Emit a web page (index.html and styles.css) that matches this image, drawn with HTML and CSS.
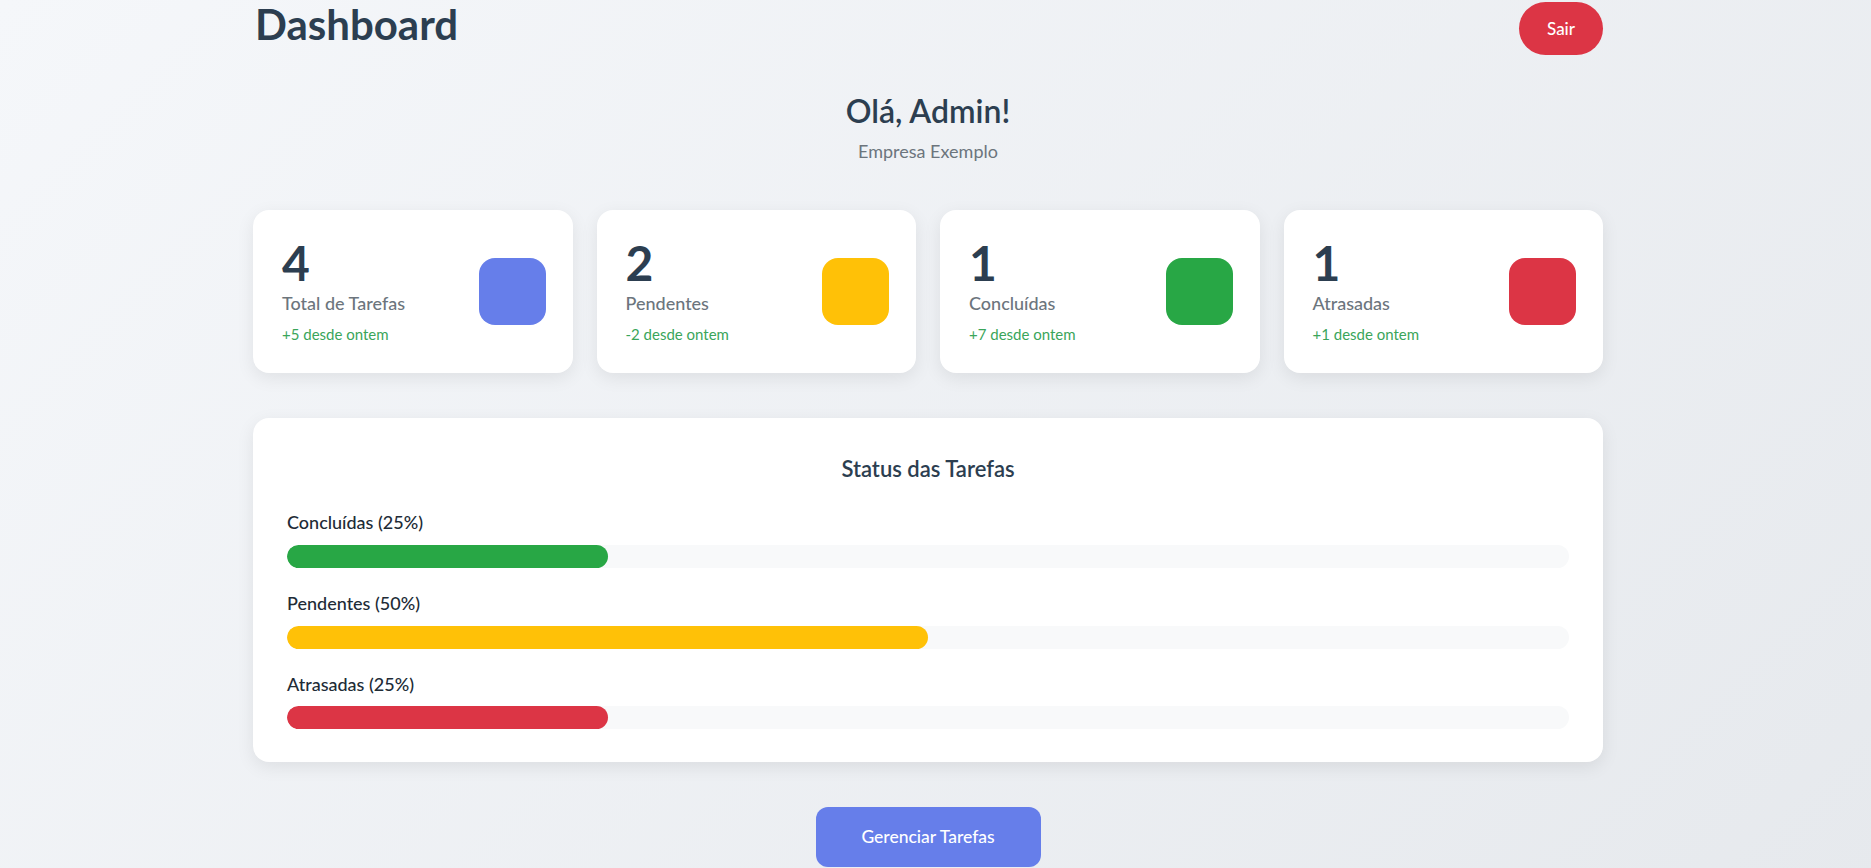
FILE: index.html
```html
<!DOCTYPE html>
<html lang="pt-BR">
<head>
<meta charset="utf-8">
<title>Dashboard</title>
<link rel="stylesheet" href="styles.css">
</head>
<body>
<div class="container">
  <header class="header">
    <h1 class="title">Dashboard</h1>
    <button class="btn-logout">Sair</button>
  </header>

  <section class="welcome">
    <h2 class="welcome-title">Olá, Admin!</h2>
    <p class="welcome-company">Empresa Exemplo</p>
  </section>

  <section class="stats">
    <div class="stat-card">
      <div class="stat-info">
        <div class="stat-number">4</div>
        <div class="stat-label">Total de Tarefas</div>
        <div class="stat-change">+5 desde ontem</div>
      </div>
      <div class="stat-icon icon-total"></div>
    </div>
    <div class="stat-card">
      <div class="stat-info">
        <div class="stat-number">2</div>
        <div class="stat-label">Pendentes</div>
        <div class="stat-change">-2 desde ontem</div>
      </div>
      <div class="stat-icon icon-pending"></div>
    </div>
    <div class="stat-card">
      <div class="stat-info">
        <div class="stat-number">1</div>
        <div class="stat-label">Concluídas</div>
        <div class="stat-change">+7 desde ontem</div>
      </div>
      <div class="stat-icon icon-done"></div>
    </div>
    <div class="stat-card">
      <div class="stat-info">
        <div class="stat-number">1</div>
        <div class="stat-label">Atrasadas</div>
        <div class="stat-change">+1 desde ontem</div>
      </div>
      <div class="stat-icon icon-late"></div>
    </div>
  </section>

  <section class="status-panel">
    <h3 class="status-title">Status das Tarefas</h3>
    <div class="status-list">
      <div class="status-row">
        <div class="status-label">Concluídas (25%)</div>
        <div class="track"><div class="fill fill-done" style="width: 25%"></div></div>
      </div>
      <div class="status-row">
        <div class="status-label">Pendentes (50%)</div>
        <div class="track"><div class="fill fill-pending" style="width: 50%"></div></div>
      </div>
      <div class="status-row">
        <div class="status-label">Atrasadas (25%)</div>
        <div class="track"><div class="fill fill-late" style="width: 25%"></div></div>
      </div>
    </div>
  </section>

  <div class="actions">
    <button class="btn-manage">Gerenciar Tarefas</button>
  </div>
</div>
</body>
</html>
```

FILE: styles.css
```css
* {
  box-sizing: border-box;
}

html, body {
  margin: 0;
  padding: 0;
}

body {
  font-family: "Lato", "Liberation Sans", sans-serif;
  background: linear-gradient(135deg, #f5f7fa 0%, #e6e9ed 100%);
  min-height: 100vh;
  color: #2c3e50;
  padding-right: 15px;
}

.container {
  width: 1350px;
  margin: 0 auto;
  padding-top: 2px;
}

.header {
  display: flex;
  justify-content: space-between;
  align-items: flex-start;
  height: 53px;
}

.title {
  margin: -3px 0 0 2px;
  font-size: 42px;
  line-height: 1.2;
  font-weight: 700;
  color: #2c3e50;
}

.btn-logout {
  font-family: inherit;
  background: #dc3545;
  color: #fff;
  border: none;
  border-radius: 30px;
  font-size: 17px;
  font-weight: 500;
  line-height: 21px;
  padding: 16px 28px;
  width: 84px;
  height: 53px;
}

.welcome {
  text-align: center;
  margin-top: 37px;
}

.welcome-title {
  margin: 0;
  font-size: 32px;
  line-height: 1.2;
  font-weight: 600;
  color: #2c3e50;
}

.welcome-company {
  margin: 8px 0 0;
  font-size: 18px;
  line-height: 27px;
  color: #6c757d;
}

.stats {
  display: grid;
  grid-template-columns: repeat(4, 1fr);
  gap: 24px;
  margin-top: 45px;
}

.stat-card {
  background: #fff;
  border-radius: 16px;
  padding: 29px 27px 30px 29px;
  display: flex;
  justify-content: space-between;
  align-items: center;
  box-shadow: 0 5px 18px rgba(0, 0, 0, 0.08);
}

.stat-number {
  font-size: 48px;
  line-height: 48px;
  font-weight: 700;
  color: #2c3e50;
}

.stat-label {
  margin-top: 6px;
  font-size: 18px;
  line-height: 21.6px;
  font-weight: 500;
  color: #6c757d;
}

.stat-change {
  margin-top: 10px;
  font-size: 15px;
  line-height: 18px;
  font-weight: 400;
  color: #3aa55a;
}

.stat-icon {
  width: 67px;
  height: 67px;
  border-radius: 16px;
}

.icon-total { background: #667eea; }
.icon-pending { background: #ffc107; }
.icon-done { background: #28a745; }
.icon-late { background: #dc3545; }

.status-panel {
  margin-top: 45px;
  background: #fff;
  border-radius: 16px;
  padding: 38px 34px 33px;
  box-shadow: 0 5px 18px rgba(0, 0, 0, 0.08);
}

.status-title {
  margin: 0;
  text-align: center;
  font-size: 22px;
  line-height: 26.4px;
  font-weight: 600;
  color: #2c3e50;
}

.status-list {
  display: flex;
  flex-direction: column;
  gap: 25px;
  margin-top: 30px;
}

.status-label {
  font-size: 18px;
  line-height: 21.6px;
  font-weight: 500;
  color: #212b36;
}

.track {
  margin-top: 11px;
  height: 23px;
  background: #f8f9fa;
  border-radius: 12px;
  overflow: hidden;
}

.fill {
  height: 100%;
  border-radius: 12px;
}

.fill-done { background: #28a745; }
.fill-pending { background: #ffc107; }
.fill-late { background: #dc3545; }

.actions {
  display: flex;
  justify-content: center;
  margin-top: 45px;
  padding-bottom: 40px;
}

.btn-manage {
  font-family: inherit;
  background: #667eea;
  color: #fff;
  border: none;
  border-radius: 12px;
  font-size: 17.5px;
  font-weight: 500;
  line-height: 20px;
  padding: 20px 42px;
  width: 225px;
}
```
